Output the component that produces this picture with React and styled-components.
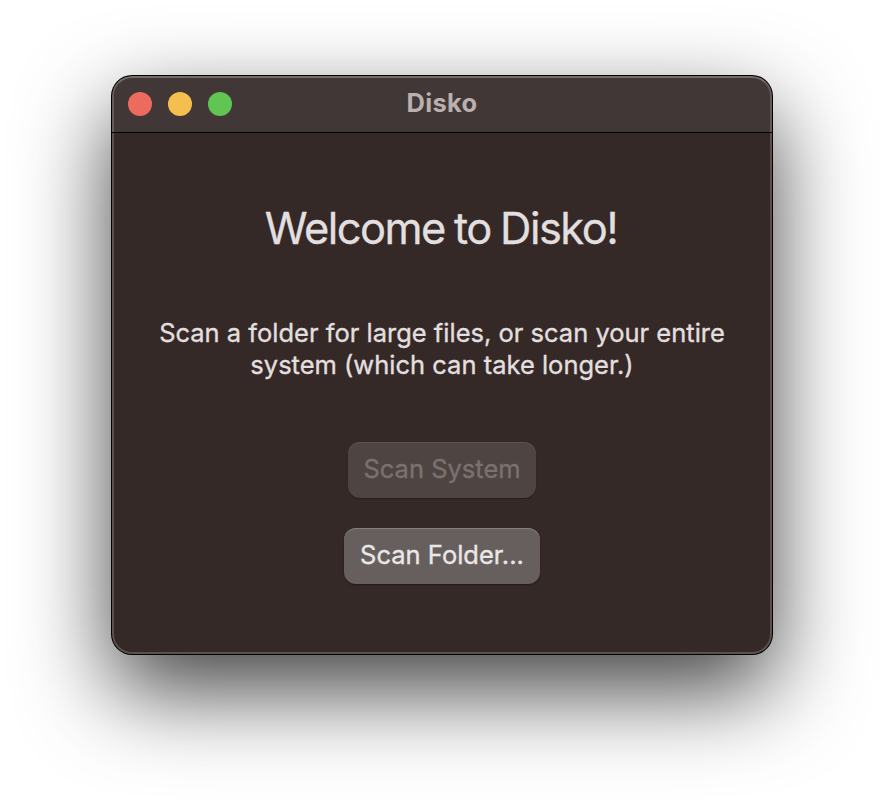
import React from 'react';
import styled, { createGlobalStyle } from 'styled-components';

const GlobalStyle = createGlobalStyle`
  * { box-sizing: border-box; }
  body { margin: 0; background: #fff; overflow: hidden; }
`;

const Desktop = styled.main`
  height: 802px;
  width: 884px;
  padding: 76px 112px 0;
  overflow: hidden;
  background: #fff;
  font-family: Inter, sans-serif;
`;

const Window = styled.section`
  display: flex;
  flex-direction: column;
  width: 660px;
  height: 578px;
  border-radius: 20px;
  background: #352927;
  overflow: hidden;
  box-shadow: 0 0 0 1px #000, 0 36px 90px rgba(0, 0, 0, 0.75);
`;

const TitleBar = styled.header`
  display: grid;
  grid-template-columns: 1fr auto 1fr;
  align-items: center;
  height: 56px;
  padding: 0 14px 2px;
  background: #403736;
  border: 2px solid #635a59;
  border-top-color: #746c6b;
  border-bottom: 0;
  border-radius: 20px 20px 0 0;
`;

const Divider = styled.div`
  height: 1px;
  background: #000;
`;

const Lights = styled.div`
  display: flex;
  gap: 16px;
`;

const Light = styled.span`
  width: 24px;
  height: 24px;
  border-radius: 50%;
  background: ${({ $color }) => $color};
`;

const Title = styled.div`
  padding-bottom: 2px;
  font-size: 25.5px;
  font-weight: 700;
  line-height: 30px;
  letter-spacing: 0.3px;
  color: #b9b0af;
`;

const Content = styled.div`
  flex: 1;
  display: flex;
  flex-direction: column;
  align-items: center;
  padding-top: 67px;
  border: 2px solid #5d514f;
  border-top: 0;
  border-radius: 0 0 20px 20px;
  color: #e1dfdf;
  text-align: center;
`;

const Heading = styled.h1`
  margin: 0;
  padding-right: 2px;
  font-size: 43.5px;
  font-weight: 400;
  line-height: 56px;
  letter-spacing: -1.55px;
  word-spacing: -1.5px;
  white-space: nowrap;
  -webkit-text-stroke: 0.3px currentColor;
`;

const Description = styled.p`
  margin: 61px 0;
  font-size: 25.5px;
  font-weight: 400;
  line-height: 32px;
  white-space: nowrap;
  -webkit-text-stroke: 0.35px currentColor;
`;

const Line = styled.span`
  display: block;
`;

const Button = styled.button`
  width: ${({ $width }) => $width};
  height: 56px;
  padding: 0 0 2px;
  margin-bottom: 30px;
  border: 0;
  border-radius: 12px;
  background: #675f5d;
  color: #e9e7e7;
  font: 400 25.5px/32px Inter, sans-serif;
  -webkit-text-stroke: 0.35px currentColor;
  white-space: nowrap;
  box-shadow: inset 0 1px #847d7c, 0 1px 2px rgba(0, 0, 0, 0.4);
  &:disabled {
    background: #4e4442;
    color: #7b7170;
    box-shadow: inset 0 1px #5b5150, 0 1px 1px rgba(0, 0, 0, 0.3);
  }
`;

export default function App() {
  return (
    <>
      <GlobalStyle />
      <Desktop>
        <Window>
          <TitleBar>
            <Lights>
              <Light $color="#ed6a5e" />
              <Light $color="#f5bf4f" />
              <Light $color="#61c554" />
            </Lights>
            <Title>Disko</Title>
          </TitleBar>
          <Divider />
          <Content>
            <Heading>Welcome to Disko!</Heading>
            <Description>
              <Line>Scan a folder for large files, or scan your entire</Line>
              <Line>system (which can take longer.)</Line>
            </Description>
            <Button $width="188px" disabled>Scan System</Button>
            <Button $width="196px">Scan Folder...</Button>
          </Content>
        </Window>
      </Desktop>
    </>
  );
}
